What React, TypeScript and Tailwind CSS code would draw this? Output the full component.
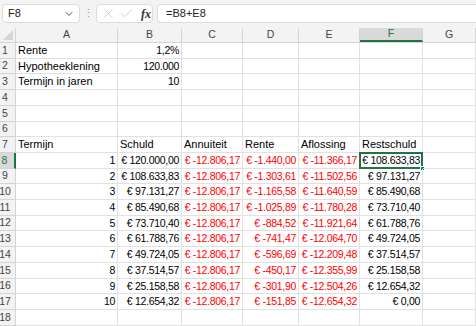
import React from "react";
import { ChevronDown, X, Check } from "lucide-react";

const COLS = [
  { key: "A", w: "w-[102px]" },
  { key: "B", w: "w-[64px]" },
  { key: "C", w: "w-[61px]" },
  { key: "D", w: "w-[56px]" },
  { key: "E", w: "w-[61px]" },
  { key: "F", w: "w-[63px]" },
  { key: "G", w: "flex-1" },
];

type Cell = { t: string; align?: "l" | "r"; red?: boolean; num?: boolean };

const data: [string, string, string, string, string][] = [
  ["€ 120.000,00", "€ -12.806,17", "€ -1.440,00", "€ -11.366,17", "€ 108.633,83"],
  ["€ 108.633,83", "€ -12.806,17", "€ -1.303,61", "€ -11.502,56", "€ 97.131,27"],
  ["€ 97.131,27", "€ -12.806,17", "€ -1.165,58", "€ -11.640,59", "€ 85.490,68"],
  ["€ 85.490,68", "€ -12.806,17", "€ -1.025,89", "€ -11.780,28", "€ 73.710,40"],
  ["€ 73.710,40", "€ -12.806,17", "€ -884,52", "€ -11.921,64", "€ 61.788,76"],
  ["€ 61.788,76", "€ -12.806,17", "€ -741,47", "€ -12.064,70", "€ 49.724,05"],
  ["€ 49.724,05", "€ -12.806,17", "€ -596,69", "€ -12.209,48", "€ 37.514,57"],
  ["€ 37.514,57", "€ -12.806,17", "€ -450,17", "€ -12.355,99", "€ 25.158,58"],
  ["€ 25.158,58", "€ -12.806,17", "€ -301,90", "€ -12.504,26", "€ 12.654,32"],
  ["€ 12.654,32", "€ -12.806,17", "€ -151,85", "€ -12.654,32", "€ 0,00"],
];

function buildRows(): Cell[][] {
  const rows: Cell[][] = [
    [{ t: "Rente" }, { t: "1,2%", align: "r", num: true }],
    [{ t: "Hypotheeklening" }, { t: "120.000", align: "r", num: true }],
    [{ t: "Termijn in jaren" }, { t: "10", align: "r", num: true }],
    [],
    [],
    [],
    ["Termijn", "Schuld", "Annuiteit", "Rente", "Aflossing", "Restschuld"].map((t) => ({ t })),
  ];
  data.forEach((d, i) => {
    rows.push([
      { t: String(i + 1), align: "r", num: true },
      { t: d[0], align: "r", num: true },
      { t: d[1], align: "r", num: true, red: true },
      { t: d[2], align: "r", num: true, red: true },
      { t: d[3], align: "r", num: true, red: true },
      { t: d[4], align: "r", num: true },
    ]);
  });
  rows.push([]);
  return rows;
}

// row heights approximating Excel's 15.7px rows
const HEIGHTS = [16, 15, 16, 16, 16, 15, 16, 16, 15, 16, 16, 15, 16, 16, 16, 15, 16, 16];

export default function App() {
  const rows = buildRows();

  return (
    <div className="w-[476px] h-[326px] overflow-hidden bg-white font-['Liberation_Sans',Arial,sans-serif] text-black">
      {/* Formula bar */}
      <div className="h-[28px] bg-[#f3f3f3] flex items-start pt-[4px] pl-[2px]">
        <div className="w-[78px] h-[19px] bg-white border border-[#dcdcdc] rounded-[4px] flex items-center justify-between pl-[5px] pr-[4px] text-[11px] text-[#222]">
          <span>F8</span>
          <ChevronDown className="w-[12px] h-[12px] text-[#555]" strokeWidth={2} />
        </div>
        <div className="w-[16px] h-[19px] flex items-center justify-center text-[#9a9a9a] text-[11px]">⋮</div>
        <div className="w-[57px] h-[19px] bg-white border border-[#dcdcdc] rounded-[4px] flex items-center pl-[4px] gap-[3px]">
          <X className="w-[15px] h-[15px] text-[#b8b8b8]" strokeWidth={1.1} />
          <Check className="w-[15px] h-[15px] text-[#b8b8b8]" strokeWidth={1.1} />
          <span className="ml-[4px] font-['Liberation_Serif',serif] italic text-[12px] text-[#333] font-bold leading-none">fx</span>
        </div>
        <div className="ml-[4px] flex-1 h-[19px] bg-white border border-[#dcdcdc] rounded-l-[4px] border-r-0 flex items-center pl-[8px] text-[11px] text-[#222]">
          =B8+E8
        </div>
      </div>

      {/* Column headers */}
      <div className="h-[15px] flex bg-[#f3f3f3] border-b border-[#d4d4d4] text-[10.5px] text-[#444]">
        <div className="w-[16px] relative border-r border-[#d4d4d4]">
          <svg className="absolute right-[2px] bottom-[2px]" width="10" height="10" viewBox="0 0 10 10">
            <polygon points="10,0 10,10 0,10" fill="#d6d6d6" />
          </svg>
        </div>
        {COLS.map((c) => (
          <div
            key={c.key}
            className={`${c.w} flex items-center justify-center border-r border-[#d4d4d4] ${
              c.key === "F" ? "bg-[#d9d9d9] text-[#217346] border-b-2 border-b-[#217346]" : ""
            }`}
          >
            {c.key}
          </div>
        ))}
      </div>

      {/* Grid rows */}
      {rows.map((cells, r) => {
        const selRow = r === 7;
        return (
          <div key={r} className={`flex ${HEIGHTS[r] === 16 ? "h-[16px]" : "h-[15px]"}`}>
            <div
              className={`w-[16px] flex items-center justify-center pr-[5px] text-[10.5px] border-b border-[#d4d4d4] ${
                selRow
                  ? "bg-[#d9d9d9] text-[#217346] border-r-2 border-r-[#217346]"
                  : "bg-[#f3f3f3] text-[#444] border-r border-[#d4d4d4]"
              }`}
            >
              {r + 1}
            </div>
            {COLS.map((c, ci) => {
              const cell = cells[ci];
              const selected = selRow && c.key === "F";
              return (
                <div
                  key={c.key}
                  className={`${c.w} relative flex items-center border-r border-b border-[#e1e1e1] whitespace-nowrap ${
                    cell?.align === "r" ? "justify-end pr-[2px]" : "justify-start pl-[2px]"
                  }`}
                >
                  {cell && (
                    <span
                      className={`${cell.num ? "text-[10.5px] tracking-[-0.3px]" : "text-[11px]"} ${
                        cell.red ? "text-[#ff0000]" : "text-black"
                      } leading-none`}
                    >
                      {cell.t}
                    </span>
                  )}
                  {selected && (
                    <>
                      <div className="absolute inset-[-1px] border-2 border-[#217346] pointer-events-none" />
                      <div className="absolute right-[-3px] bottom-[-3px] w-[5px] h-[5px] bg-[#217346] border border-white" />
                    </>
                  )}
                </div>
              );
            })}
          </div>
        );
      })}
    </div>
  );
}
